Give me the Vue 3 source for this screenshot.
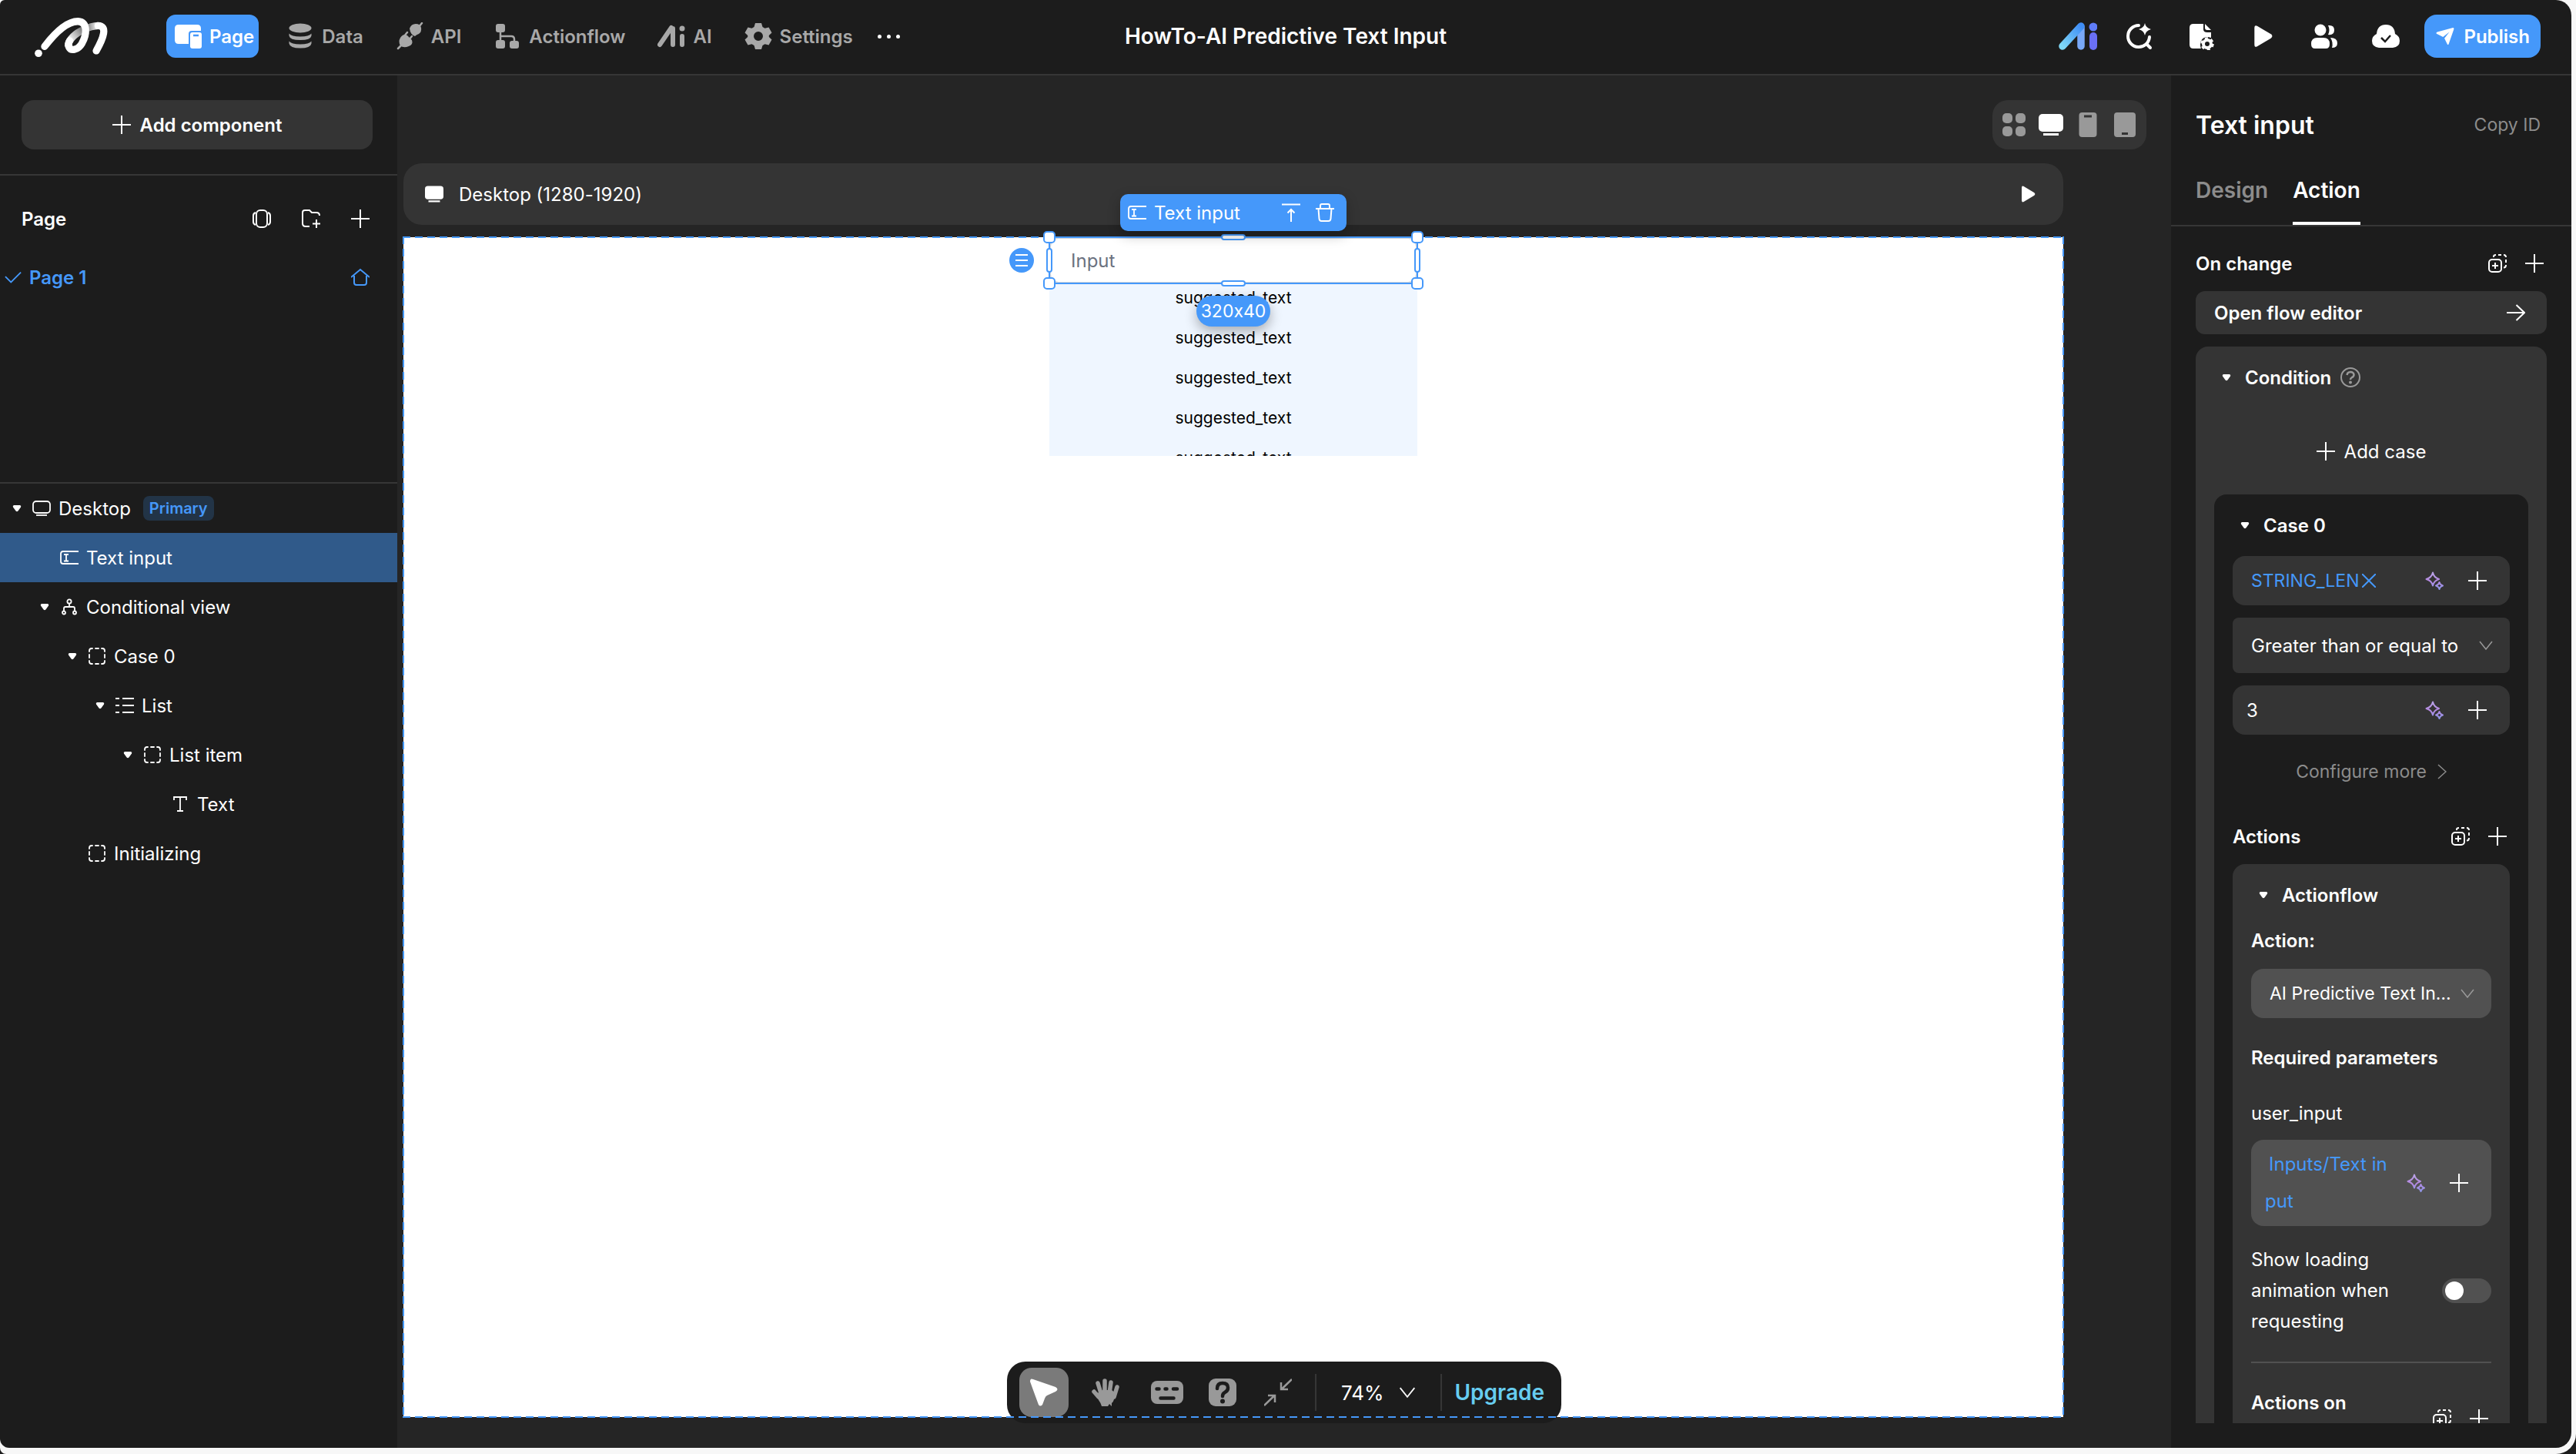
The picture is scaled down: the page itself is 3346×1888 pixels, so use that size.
<script setup>
import { ref } from "vue";

const tabs = [
  { name: "Page", icon: "page" },
  { name: "Data", icon: "data" },
  { name: "API", icon: "api" },
  { name: "Actionflow", icon: "flow" },
  { name: "AI", icon: "ai" },
  { name: "Settings", icon: "gear" },
];
const activeTab = ref("Page");

const tools = [
  { name: "Search", icon: "search" },
  { name: "Page settings", icon: "file" },
  { name: "Preview", icon: "play" },
  { name: "Members", icon: "users" },
  { name: "Saved", icon: "cloud" },
];

const devices = [
  { name: "All screens", icon: "grid" },
  { name: "Desktop", icon: "monitor" },
  { name: "Phone", icon: "phone" },
  { name: "Tablet", icon: "tablet" },
];
const activeDevice = ref("Desktop");

const tree = [
  { name: "Desktop", icon: "screen", level: 0, open: true, badge: "Primary" },
  { name: "Text input", icon: "textinput", level: 1 },
  { name: "Conditional view", icon: "branch", level: 1, open: true },
  { name: "Case 0", icon: "box", level: 2, open: true },
  { name: "List", icon: "list", level: 3, open: true },
  { name: "List item", icon: "box", level: 4, open: true },
  { name: "Text", icon: "text", level: 5 },
  { name: "Initializing", icon: "box", level: 2 },
];
const selected = ref("Text input");

const handles = ["nw", "n", "ne", "e", "se", "s", "sw", "w"];

const panelTab = ref("Action");
const operator = ref("gte");
const action = ref("predictive");
const compareValue = ref("3");
const showLoading = ref(false);
</script>

<template>
  <svg class="sprite" aria-hidden="true">
    <defs>
      <linearGradient id="g-ai" x1="0" y1="1" x2="1" y2="0">
        <stop offset="0" stop-color="#7fd8f7" />
        <stop offset="1" stop-color="#3f8df5" />
      </linearGradient>
      <linearGradient id="g-spark" x1="0" y1="0" x2="0" y2="1">
        <stop offset="0" stop-color="#b9a3e6" />
        <stop offset="0.5" stop-color="#b488e0" />
        <stop offset="1" stop-color="#8f96e8" />
      </linearGradient>
      <linearGradient id="g-logo" gradientUnits="userSpaceOnUse" x1="180" y1="125" x2="236" y2="82">
        <stop offset="0" stop-color="#fff" />
        <stop offset="1" stop-color="#777" />
      </linearGradient>
      <linearGradient id="g-logo2" gradientUnits="userSpaceOnUse" x1="250" y1="70" x2="292" y2="66">
        <stop offset="0" stop-color="#888" />
        <stop offset="1" stop-color="#fff" />
      </linearGradient>
    </defs>
    <symbol id="i-plus" viewBox="0 0 24 24">
      <path d="M12 0v24M0 12h24" stroke="currentColor" stroke-width="2" />
    </symbol>
    <symbol id="i-caret" viewBox="0 0 12 12">
      <path d="M2 2h8q2 .6 1 2.400L7.400 9.400Q6 11 4.600 9.400L1 4.400Q0 2.600 2 2z" fill="currentColor" />
    </symbol>
    <symbol id="i-down" viewBox="0 0 18 12">
      <path d="M1 1l8 10 8-10" fill="none" stroke="currentColor" stroke-width="1.500" />
    </symbol>
    <symbol id="i-copy" viewBox="0 0 24 24">
      <rect x="1" y="7" width="16" height="16" rx="4" fill="none" stroke="currentColor" stroke-width="2" />
      <path d="M9 11v8M5 15h8" stroke="currentColor" stroke-width="2" />
      <path d="M7 4V3q0-2 3-2M13 1h4M20 1q3 0 3 3M23 7v4M23 14q0 3.500-3 3.500" fill="none" stroke="currentColor" stroke-width="2" />
    </symbol>
    <symbol id="i-spark" viewBox="0 0 24 24">
      <path d="M10 1.500c1 4.500 3 7 8 8.500-5 1.500-7 4-8 8.500C9 14 7 11.500 1.500 10 7 8.500 9 6 10 1.500zM18.500 14q.8 3.500 4.500 4.500-3.700 1-4.500 4.500-.8-3.500-4.500-4.500 3.700-1 4.500-4.500z" fill="none" stroke="url(#g-spark)" stroke-width="2" stroke-linejoin="round" />
    </symbol>
    <symbol id="i-page" viewBox="0 0 36 36">
      <path d="M6 3h24q5 0 5 5v3H23q-4 0-4 4v13H6q-5 0-5-5V8q0-5 5-5z" fill="currentColor" />
      <rect x="21" y="13" width="15" height="21" rx="3" fill="currentColor" />
      <path d="M25 17h7" stroke="#4598fa" stroke-width="2.500" />
    </symbol>
    <symbol id="i-data" viewBox="0 0 36 36">
      <ellipse cx="18" cy="7.500" rx="14.500" ry="6" fill="currentColor" />
      <path d="M3.500 14.500q3 4 14.500 4t14.500-4v3q-1 5.500-14.500 5.500T3.500 17.500zM3.500 24.500q3 4 14.500 4t14.500-4v3q-1 6-14.500 6t-14.500-6z" fill="currentColor" />
    </symbol>
    <symbol id="i-api" viewBox="0 0 36 36">
      <path d="M30 6l4-5M3 34l4-4M11 18l4-5M17 23l4-5" stroke="currentColor" stroke-width="2.500" stroke-linecap="round" />
      <path d="M6 20q4-6 9-3l6 6q2 6-4 8-7 3-11-1-3-5 0-10zM18 8q2-6 8-6t7 5q1 5-3 8-3 1-5 3-6-2-7-10z" fill="currentColor" />
    </symbol>
    <symbol id="i-flow" viewBox="0 0 36 36">
      <rect x="3" y="2" width="12" height="11" rx="3" fill="currentColor" />
      <rect x="3" y="23" width="12" height="11" rx="3" fill="currentColor" />
      <rect x="21" y="24" width="12" height="10" rx="3" fill="currentColor" />
      <path d="M9 12v12M9 18h14q4 0 4 4v3" fill="none" stroke="currentColor" stroke-width="2.500" />
    </symbol>
    <symbol id="i-ai" viewBox="0 0 36 36">
      <path d="M3 29L18 7M20 8v21M32 18v11" stroke="currentColor" stroke-width="6" stroke-linecap="round" />
      <circle cx="32" cy="8" r="3.500" fill="currentColor" />
    </symbol>
    <symbol id="i-gear" viewBox="0 0 36 36">
      <path fill-rule="evenodd" d="M14 1h8l1.500 5 3 1.800 5-1.200 4 7-3.700 3.400v2l3.700 3.400-4 7-5-1.200-3 1.800L22 35h-8l-1.500-5-3-1.800-5 1.200-4-7L4.200 19v-2L.5 13.600l4-7 5 1.200 3-1.800zM18 12a6 6 0 1 0 0 12 6 6 0 0 0 0-12z" fill="currentColor" />
    </symbol>
    <symbol id="i-search" viewBox="0 0 36 36">
      <path d="M17 4A14 14 0 1 0 31 19M27 28l5 5" fill="none" stroke="currentColor" stroke-width="4" stroke-linecap="round" />
      <path d="M25 1q1 6 8 8-7 2-8 8-1-6-8-8 7-2 8-8z" fill="currentColor" />
    </symbol>
    <symbol id="i-file" viewBox="0 0 36 36">
      <path d="M8 2h13v7q0 4 5 4h5v7q-9-3-13 4-2 5 0 10H8q-5 0-5-5V7q0-5 5-5zM23 2l8 8h-5q-3 0-3-3z" fill="currentColor" />
      <circle cx="26" cy="28" r="5" fill="none" stroke="currentColor" stroke-width="4" />
      <circle cx="26" cy="28" r="7.500" fill="none" stroke="currentColor" stroke-width="2.500" stroke-dasharray="4 4" />
    </symbol>
    <symbol id="i-play" viewBox="0 0 36 36">
      <path d="M6 6q0-5 4-3l20 12q4 3 0 6L10 33q-4 2-4-3z" fill="currentColor" />
    </symbol>
    <symbol id="i-users" viewBox="0 0 36 36">
      <circle cx="13" cy="10" r="7.500" fill="currentColor" />
      <path d="M1 28q0-8 8-8h8q8 0 8 8 0 6-5 6H6q-5 0-5-6zM23 4q8-1 8 6t-8 6q3-6 0-12zM26 20q9 0 9 7 0 6-7 6 2-7-2-13z" fill="currentColor" />
    </symbol>
    <symbol id="i-cloud" viewBox="0 0 36 36">
      <path d="M9 33q-9-1-9-9 0-6 6-9Q7 3 18 3t12 12q6 3 6 9 0 8-9 9z" fill="currentColor" />
      <path d="M12 20l5 5 7-8" fill="none" stroke="#1c1c1c" stroke-width="2.500" />
    </symbol>
    <symbol id="i-send" viewBox="0 0 26 26">
      <path d="M24 1q2 0 1 3l-7 20q-1 2-2 0l-4-8 7-9-9 7-8-4q-3-1 0-3z" fill="currentColor" />
    </symbol>
    <symbol id="i-grid" viewBox="0 0 32 32">
      <g fill="currentColor"><rect x="1" y="1" width="13" height="13" rx="5" /><rect x="18" y="1" width="13" height="13" rx="5" /><rect x="1" y="18" width="13" height="13" rx="5" /><rect x="18" y="18" width="13" height="13" rx="5" /></g>
    </symbol>
    <symbol id="i-monitor" viewBox="0 0 32 32">
      <rect y="2" width="32" height="23" rx="5" fill="currentColor" />
      <path d="M6 28.500h20" stroke="currentColor" stroke-width="3" />
    </symbol>
    <symbol id="i-phone" viewBox="0 0 32 32">
      <rect x="4.500" width="23" height="32" rx="4" fill="currentColor" />
      <path d="M11 5h10" stroke="#343434" stroke-width="3" />
    </symbol>
    <symbol id="i-tablet" viewBox="0 0 32 32">
      <rect x="2" width="28" height="32" rx="4" fill="currentColor" />
      <path d="M12 27.500h8" stroke="#343434" stroke-width="3" />
    </symbol>
    <symbol id="i-screen" viewBox="0 0 24 24">
      <rect x="1" y="3" width="22" height="15" rx="4" fill="none" stroke="currentColor" stroke-width="1.800" />
      <path d="M5 21h14" stroke="currentColor" stroke-width="1.800" />
    </symbol>
    <symbol id="i-textinput" viewBox="0 0 24 24">
      <path d="M24 4H4Q1 4 1 7v10q0 3 3 3h20M5 8h6M8 8v8.500M5 16.500h6" fill="none" stroke="currentColor" stroke-width="1.800" />
    </symbol>
    <symbol id="i-branch" viewBox="0 0 24 24">
      <g fill="none" stroke="currentColor" stroke-width="1.800"><circle cx="12" cy="5" r="2.600" /><circle cx="5" cy="19.500" r="2" /><circle cx="19" cy="19.500" r="2" /><path d="M12 8v4M5 17v-3q0-2 2-2h10q2 0 2 2v3" /></g>
    </symbol>
    <symbol id="i-box" viewBox="0 0 24 24">
      <path d="M2 6V5q0-3 3-3h1M18 2h1q3 0 3 3v1M22 18v1q0 3-3 3h-1M6 22H5q-3 0-3-3v-1M10 2h4M10 22h4M2 10v4M22 10v4" fill="none" stroke="currentColor" stroke-width="1.800" stroke-linecap="round" />
    </symbol>
    <symbol id="i-list" viewBox="0 0 24 24">
      <path d="M0 3h5M0 12h5M0 21h5M9 3h15M9 12h15M9 21h15" stroke="currentColor" stroke-width="1.800" />
    </symbol>
    <symbol id="i-text" viewBox="0 0 24 24">
      <path d="M4 7V3h16v4M12 3v18M8 21h8" fill="none" stroke="currentColor" stroke-width="1.800" />
    </symbol>
    <symbol id="i-top" viewBox="0 0 24 24">
      <path d="M0 1.500h24M12 24V8M7.500 12.500L12 8l4.500 4.500" fill="none" stroke="currentColor" stroke-width="2" />
    </symbol>
    <symbol id="i-trash" viewBox="0 0 24 24">
      <path d="M0 7h24M6 7V3q0-2 2-2h8q2 0 2 2v4M3.500 7l1 13q.3 3 3 3h9q2.700 0 3-3l1-13" fill="none" stroke="currentColor" stroke-width="2" />
    </symbol>
  </svg>

  <div class="window">
    <div class="app">
      <header class="topbar">
        <svg class="logo" viewBox="40 25 292 165" role="img" aria-label="Home">
          <circle cx="58" cy="173" r="14.500" fill="#fff" />
          <g fill="none" stroke-width="28" stroke-linecap="round">
            <path d="M174 146C174 118 204 94 236 80" stroke="url(#g-logo)" stroke-linecap="butt" />
            <path d="M236 80Q265 66 292 65" stroke="url(#g-logo2)" stroke-linecap="butt" />
            <path d="M291 65C329 65 313 112 284 163" stroke="#fff" />
            <path d="M82 146C125 90 170 47 213 48C252 50 247 100 228 134C212 161 186 164 178 150C173 141 174 134 180 124" stroke="#fff" />
          </g>
        </svg>
        <nav class="tabs">
          <button
            v-for="tab in tabs"
            :key="tab.name"
            class="tab"
            :class="{ active: tab.name === activeTab }"
            @click="activeTab = tab.name"
          >
            <svg class="icon-lg"><use :href="`#i-${tab.icon}`" /></svg>{{ tab.name }}
          </button>
          <button class="more" aria-label="More"><i></i><i></i><i></i></button>
        </nav>
        <h1 class="project">HowTo-AI Predictive Text Input</h1>
        <div class="tools">
          <button class="tool" aria-label="AI assistant">
            <svg class="ai-logo" viewBox="0 0 50 36">
              <path d="M29 6v25" stroke="#79a8f8" stroke-width="9.500" stroke-linecap="round" />
              <path d="M5 31L29 5" stroke="url(#g-ai)" stroke-width="9.500" stroke-linecap="round" />
              <path d="M45 18v13" stroke="#6a6ff5" stroke-width="10" stroke-linecap="round" />
              <circle cx="45" cy="6" r="5.500" fill="#5f7cf8" />
            </svg>
          </button>
          <button v-for="tool in tools" :key="tool.name" class="tool" :aria-label="tool.name">
            <svg class="icon-lg" :class="{ slim: tool.icon === 'play' }"><use :href="`#i-${tool.icon}`" /></svg>
          </button>
          <button class="publish">
            <svg class="icon"><use href="#i-send" /></svg>Publish
          </button>
        </div>
      </header>

      <div class="main">
        <aside class="left">
          <div class="add-box">
            <button class="add"><svg class="icon"><use href="#i-plus" /></svg>Add component</button>
          </div>
          <section class="pages">
            <div class="pages-head">
              <h2>Page</h2>
              <button aria-label="Carousel">
                <svg class="icon" viewBox="0 0 24 24"><rect x="5" y="1" width="14" height="22" rx="5" fill="none" stroke="currentColor" stroke-width="2" /><path d="M4 4Q1 5 1 8v8q0 3 3 4M20 4q3 1 3 4v8q0 3-3 4" fill="none" stroke="currentColor" stroke-width="2" /></svg>
              </button>
              <button aria-label="New folder">
                <svg class="icon" viewBox="0 0 24 24"><path d="M23 8q0-4-4-4h-6l-3-3H4Q1 1 1 4v14q0 4 4 4h5M19 13v11M14 18.500h10" fill="none" stroke="currentColor" stroke-width="2" /></svg>
              </button>
              <button aria-label="New page"><svg class="icon"><use href="#i-plus" /></svg></button>
            </div>
            <button class="page-row">
              <svg class="check" viewBox="0 0 24 18"><path d="M1 8l8 8L23 2" fill="none" stroke="currentColor" stroke-width="2" /></svg>
              <span>Page 1</span>
              <svg class="icon" viewBox="0 0 24 24"><path d="M0 12L12 2l12 10M4 10v9q0 3 3 3h10q3 0 3-3v-9" fill="none" stroke="currentColor" stroke-width="2" /></svg>
            </button>
          </section>
          <ul class="tree">
            <li v-for="node in tree" :key="node.name">
              <button
                class="node"
                :class="{ selected: node.name === selected }"
                :style="{ paddingLeft: `${12 + node.level * 36}px` }"
                @click="selected = node.name"
              >
                <span class="caret-slot"><svg v-if="node.open" class="caret"><use href="#i-caret" /></svg></span>
                <svg class="icon"><use :href="`#i-${node.icon}`" /></svg>
                <span>{{ node.name }}</span>
                <span v-if="node.badge" class="badge">{{ node.badge }}</span>
              </button>
            </li>
          </ul>
        </aside>

        <main class="workspace">
          <div class="devices">
            <button
              v-for="device in devices"
              :key="device.name"
              :class="{ active: device.name === activeDevice }"
              :aria-label="device.name"
              @click="activeDevice = device.name"
            >
              <svg class="device-icon"><use :href="`#i-${device.icon}`" /></svg>
            </button>
          </div>
          <div class="screen-bar">
            <svg class="icon"><use href="#i-monitor" /></svg>
            <span>Desktop (1280-1920)</span>
            <button aria-label="Run preview"><svg class="icon"><use href="#i-play" /></svg></button>
          </div>
          <div class="page">
            <div class="frame">
              <input class="page-input" type="text" placeholder="Input" aria-label="Input" />
              <span v-for="h in handles" :key="h" class="handle" :class="h"></span>
              <div class="frame-bar">
                <svg class="icon"><use href="#i-textinput" /></svg>
                <span>Text input</span>
                <button aria-label="Select parent"><svg class="icon"><use href="#i-top" /></svg></button>
                <button aria-label="Delete"><svg class="icon"><use href="#i-trash" /></svg></button>
              </div>
              <button class="frame-menu" aria-label="Menu"><i></i><i></i><i></i></button>
              <span class="size">320x40</span>
            </div>
            <ul class="suggestions">
              <li v-for="n in 5" :key="n">suggested_text</li>
            </ul>
          </div>
          <div class="dock">
            <button class="dock-btn active" aria-label="Select">
              <svg viewBox="0 0 36 36"><path d="M0 4q0-5 4-3l29 10q5 3 0 6l-11 5q-2 1-3 4l-3 8q-3 3-5 0Q8 26 0 4z" fill="currentColor" /></svg>
            </button>
            <button class="dock-btn" aria-label="Pan">
              <svg viewBox="0 0 36 36"><path d="M3 17l6 7M8 6l4 13M17 3v15M25 5l-2 14M33 11l-4 13" stroke="currentColor" stroke-width="5.500" stroke-linecap="round" /><path d="M4 17l6 2 4-4h12l5 4-2 8q-1 4-3 5v4l-3-3-2 3H13q-1-4-4-8z" fill="currentColor" /></svg>
            </button>
            <button class="dock-btn" aria-label="Shortcuts">
              <svg class="keys" viewBox="0 0 42 30"><rect width="42" height="30" rx="8" fill="currentColor" /><path d="M7.500 10.500h3M18.500 10.500h2M29 10.500h5M12.500 22.500h17" stroke="#1c1c1c" stroke-width="4.500" stroke-linecap="round" /></svg>
            </button>
            <button class="dock-btn tight" aria-label="Help">
              <svg viewBox="0 0 36 36"><rect width="36" height="36" rx="9" fill="currentColor" /><path d="M11 13q0-7 7-7t7 6q0 4-4 6-3 1.500-3 5" fill="none" stroke="#1c1c1c" stroke-width="4.500" stroke-linecap="round" /><circle cx="18" cy="29.500" r="3" fill="#1c1c1c" /></svg>
            </button>
            <button class="dock-btn tight" aria-label="Zoom to fit">
              <svg viewBox="0 0 36 36"><path d="M36 1L23 13.500M22 5v9h9M0 35l13-12.500M5 22h9v9" fill="none" stroke="currentColor" stroke-width="2.500" /></svg>
            </button>
            <button class="zoom-level">74%<svg viewBox="0 0 18 12"><use href="#i-down" /></svg></button>
            <a class="upgrade" href="#upgrade">Upgrade</a>
          </div>
        </main>

        <aside class="right">
          <div class="panel-title">
            <h2>Text input</h2>
            <button>Copy ID</button>
          </div>
          <div class="panel-tabs">
            <button :class="{ active: panelTab === 'Design' }" @click="panelTab = 'Design'">Design</button>
            <button :class="{ active: panelTab === 'Action' }" @click="panelTab = 'Action'">Action</button>
          </div>
          <div class="panel-body">
            <div class="row-head first">
              <h3>On change</h3>
              <button aria-label="Paste action"><svg class="icon"><use href="#i-copy" /></svg></button>
              <button aria-label="Add action"><svg class="icon"><use href="#i-plus" /></svg></button>
            </div>
            <button class="open-flow">
              Open flow editor
              <svg class="icon" viewBox="0 0 24 24"><path d="M0 12h23M12.500 2L23 12 12.500 22" fill="none" stroke="currentColor" stroke-width="2" /></svg>
            </button>

            <div class="card condition">
              <h3 class="card-head">
                <span class="caret-slot"><svg class="caret"><use href="#i-caret" /></svg></span>Condition
                <svg class="help" viewBox="0 0 26 26"><circle cx="13" cy="13" r="12" fill="none" stroke="currentColor" stroke-width="2" /><path d="M8.500 10q.5-4 4.500-4t4.500 3.500Q17.500 12 15 13q-2 1-2 3" fill="none" stroke="currentColor" stroke-width="2.500" /><circle cx="13" cy="19.500" r="2" fill="currentColor" /></svg>
              </h3>
              <button class="add-case"><svg class="icon"><use href="#i-plus" /></svg>Add case</button>

              <div class="card case">
                <h3 class="card-head">
                  <span class="caret-slot"><svg class="caret"><use href="#i-caret" /></svg></span>Case 0
                </h3>
                <div class="fields">
                  <div class="field">
                    <button class="chip">STRING_LEN<svg viewBox="0 0 18 18"><path d="M0 0l18 18M18 0L0 18" stroke="currentColor" stroke-width="2" /></svg></button>
                    <button aria-label="Generate"><svg class="icon"><use href="#i-spark" /></svg></button>
                    <button aria-label="Bind data"><svg class="icon"><use href="#i-plus" /></svg></button>
                  </div>
                  <div class="select tall">
                    <select v-model="operator" aria-label="Operator">
                      <option value="gte">Greater than or equal to</option>
                    </select>
                    <svg><use href="#i-down" /></svg>
                  </div>
                  <div class="field narrow">
                    <input v-model="compareValue" type="text" aria-label="Value" />
                    <button aria-label="Generate"><svg class="icon"><use href="#i-spark" /></svg></button>
                    <button aria-label="Bind data"><svg class="icon"><use href="#i-plus" /></svg></button>
                  </div>
                </div>
                <button class="configure">
                  Configure more
                  <svg viewBox="0 0 12 20"><path d="M1 1l10 9L1 19" fill="none" stroke="currentColor" stroke-width="1.500" /></svg>
                </button>
                <div class="row-head">
                  <h3>Actions</h3>
                  <button aria-label="Paste action"><svg class="icon"><use href="#i-copy" /></svg></button>
                  <button aria-label="Add action"><svg class="icon"><use href="#i-plus" /></svg></button>
                </div>

                <div class="card flow">
                  <h3 class="card-head">
                    <span class="caret-slot"><svg class="caret"><use href="#i-caret" /></svg></span>Actionflow
                  </h3>
                  <label class="label" for="action">Action:</label>
                  <div class="select light">
                    <select id="action" v-model="action">
                      <option value="predictive">AI Predictive Text Input</option>
                    </select>
                    <svg><use href="#i-down" /></svg>
                  </div>
                  <h4 class="label spaced">Required parameters</h4>
                  <p class="param">user_input</p>
                  <div class="field light narrow">
                    <p class="binding"><a href="#binding">Inputs/Text input</a></p>
                    <button aria-label="Generate"><svg class="icon"><use href="#i-spark" /></svg></button>
                    <button aria-label="Bind data"><svg class="icon"><use href="#i-plus" /></svg></button>
                  </div>
                  <label class="toggle">
                    <span>Show loading animation when requesting</span>
                    <input v-model="showLoading" type="checkbox" role="switch" />
                  </label>
                  <div class="row-head success">
                    <h3>Actions on success</h3>
                    <button aria-label="Paste action"><svg class="icon"><use href="#i-copy" /></svg></button>
                    <button aria-label="Add action"><svg class="icon"><use href="#i-plus" /></svg></button>
                  </div>
                </div>
              </div>
            </div>
          </div>
        </aside>
      </div>
    </div>
  </div>
</template>

<style>
body {
  margin: 0;
  background: #1c1c1c;
}
</style>

<style scoped>
* {
  box-sizing: border-box;
}
.sprite {
  position: absolute;
  width: 0;
  height: 0;
}
.window {
  height: 100vh;
  padding: 0 6px 8px 0;
  background: #f7f7f7;
  border-radius: 0 0 26px 8px;
  font-family: Inter, "Liberation Sans", sans-serif;
  font-size: 24px;
  font-variant-ligatures: no-contextual;
  color: #fff;
  overflow: hidden;
}
.app {
  height: 100%;
  display: flex;
  flex-direction: column;
  background: #1c1c1c;
  border-radius: 6px 20px 20px 12px;
  overflow: hidden;
}
h1,
h2,
h3,
h4,
p,
ul {
  margin: 0;
  padding: 0;
  font-size: inherit;
  list-style: none;
}
h1,
h2,
h3,
h4 {
  font-weight: 600;
}
button {
  border: 0;
  padding: 0;
  background: none;
  color: inherit;
  font: inherit;
  display: flex;
  align-items: center;
  cursor: pointer;
}
a {
  text-decoration: none;
}
svg {
  flex: none;
  display: block;
}
.icon {
  width: 24px;
  height: 24px;
}
.icon-lg {
  width: 36px;
  height: 36px;
}
.slim {
  width: 32px;
  height: 32px;
}

/* top bar */
.topbar {
  flex: none;
  height: 98px;
  padding: 12px 40px 14px;
  border-bottom: 2px solid #363636;
  display: grid;
  grid-template-columns: 1fr auto 1fr;
  grid-template-rows: 100%;
  align-items: center;
}
.logo {
  width: 97px;
  height: 55px;
  margin-left: 4px;
  grid-area: 1 / 1;
}
.tabs {
  grid-area: 1 / 1;
  margin-left: 176px;
  display: flex;
  gap: 26px;
}
.tab {
  height: 56px;
  padding: 0 6px 0 10px;
  gap: 10px;
  border-radius: 12px;
  color: #a8a8a8;
  font-weight: 600;
}
.tab.active {
  background: #4598fa;
  color: #fff;
}
.more {
  gap: 7px;
}
.more i {
  width: 5px;
  height: 5px;
  border-radius: 50%;
  background: #fff;
}
.project {
  grid-area: 1 / 2;
  font-size: 28px;
}
.tools {
  grid-area: 1 / 3;
  display: flex;
  justify-content: flex-end;
  align-items: center;
}
.tool {
  width: 80px;
  height: 56px;
  justify-content: center;
}
.ai-logo {
  width: 50px;
  height: 36px;
}
.publish {
  height: 56px;
  margin-left: 10px;
  padding: 0 14px 0 15px;
  gap: 12px;
  border-radius: 16px;
  background: #4598fa;
  font-weight: 600;
}

.main {
  flex: 1;
  min-height: 0;
  display: flex;
}

/* left panel */
.left {
  flex: none;
  width: 516px;
}
.add-box {
  padding: 32px;
  padding-left: 28px;
  border-bottom: 2px solid #363636;
}
.add {
  width: 100%;
  height: 64px;
  justify-content: center;
  gap: 12px;
  border-radius: 16px;
  background: #343434;
  font-weight: 600;
}
.pages {
  min-height: 400px;
  padding: 24px 36px 0 0;
  border-bottom: 2px solid #363636;
}
.pages-head {
  height: 64px;
  padding-left: 28px;
  display: flex;
  align-items: center;
  gap: 40px;
}
.pages-head h2 {
  flex: 1;
}
.page-row {
  width: 100%;
  height: 56px;
  margin-top: 16px;
  padding-left: 6px;
  gap: 10px;
  color: #4598fa;
  font-weight: 600;
}
.page-row span {
  flex: 1;
  text-align: left;
}
.check {
  width: 22px;
  height: 18px;
}
.node {
  width: 100%;
  height: 64px;
}
.node .icon {
  margin: 0 10px;
}
.node.selected {
  background: #305a8a;
}
.caret-slot {
  width: 20px;
  display: flex;
  justify-content: center;
}
.caret {
  width: 12px;
  height: 12px;
}
.badge {
  height: 32px;
  margin-left: 16px;
  padding: 0 8px;
  border-radius: 8px;
  background: #223447;
  color: #4598fa;
  font-size: 20px;
  font-weight: 600;
  line-height: 32px;
}

/* workspace */
.workspace {
  flex: 1;
  min-width: 0;
  padding: 32px 140px 40px 8px;
  background: #252525;
  display: flex;
  flex-direction: column;
  position: relative;
}
.devices {
  align-self: flex-end;
  height: 64px;
  margin-right: -108px;
  padding: 0 4px;
  border-radius: 20px;
  background: #343434;
  display: flex;
  color: #999;
}
.devices button {
  width: 48px;
  justify-content: center;
}
.devices .active {
  color: #fff;
}
.device-icon {
  width: 32px;
  height: 32px;
}
.screen-bar {
  height: 80px;
  margin: 18px 0 16px;
  padding: 0 34px 0 28px;
  border-radius: 24px;
  background: #343434;
  display: flex;
  align-items: center;
  gap: 20px;
}
.screen-bar span {
  flex: 1;
}
.page {
  flex: 1;
  background: #fff;
  display: flex;
  flex-direction: column;
  align-items: center;
  position: relative;
}
/* dashed outline stays above the dock */
.page::after {
  content: "";
  position: absolute;
  z-index: 3;
  inset: -1px;
  pointer-events: none;
  background:
    repeating-linear-gradient(90deg, #4598fa 0 10px, transparent 10px 16px) 0 0 / 100% 2px no-repeat,
    repeating-linear-gradient(90deg, #4598fa 0 10px, transparent 10px 16px) 0 100% / 100% 2px no-repeat,
    repeating-linear-gradient(#4598fa 0 10px, transparent 10px 16px) 0 0 / 2px 100% no-repeat,
    repeating-linear-gradient(#4598fa 0 10px, transparent 10px 16px) 100% 0 / 2px 100% no-repeat;
}
.frame {
  width: 478px;
  height: 60px;
  position: relative;
  z-index: 4;
  outline: 2px solid #4598fa;
  outline-offset: -1px;
}
.page-input {
  width: 100%;
  height: 100%;
  padding: 0 26px;
  border: 2px solid #d1d5db;
  border-radius: 12px;
  background: #fff;
  color: #111;
  font: inherit;
}
.page-input::placeholder {
  color: #6b7280;
  opacity: 1;
}
.handle {
  position: absolute;
  width: 16px;
  height: 16px;
  margin: -8px;
  border: 2px solid #4598fa;
  border-radius: 5px;
  background: #fff;
}
.n,
.s {
  width: 32px;
  height: 8px;
  margin: -4px -16px;
  left: 50%;
}
.e,
.w {
  width: 8px;
  height: 32px;
  margin: -16px -4px;
  top: 50%;
}
.nw,
.n,
.ne {
  top: 0;
}
.sw,
.s,
.se {
  top: 100%;
}
.nw,
.w,
.sw {
  left: 0;
}
.ne,
.e,
.se {
  left: 100%;
}
.frame-bar {
  position: absolute;
  left: 92px;
  bottom: 68px;
  width: 294px;
  height: 48px;
  padding: 0 16px 0 10px;
  border-radius: 10px;
  background: #4598fa;
  box-shadow: 0 6px 16px rgba(0, 0, 0, 0.25);
  display: flex;
  align-items: center;
  gap: 20px;
}
.frame-bar span {
  flex: 1;
  margin-left: -10px;
  white-space: nowrap;
}
.frame-menu {
  position: absolute;
  left: -52px;
  top: 14px;
  width: 32px;
  height: 32px;
  border-radius: 50%;
  background: #4598fa;
  flex-direction: column;
  justify-content: center;
  gap: 5px;
}
.frame-menu i {
  width: 16px;
  height: 2px;
  background: #fff;
}
.size {
  position: absolute;
  left: 191px;
  top: 76px;
  width: 96px;
  border-radius: 20px;
  background: #4598fa;
  box-shadow: 0 6px 16px rgba(0, 0, 0, 0.3);
  font-size: 23px;
  line-height: 40px;
  text-align: center;
}
.suggestions {
  width: 478px;
  height: 224px;
  background: #eff6ff;
  overflow: hidden;
  color: #000;
  font-size: 21px;
  text-align: center;
}
.suggestions li {
  line-height: 38px;
  margin-bottom: 14px;
}
.dock {
  position: absolute;
  z-index: 2;
  left: 0;
  right: 0;
  bottom: 32px;
  width: fit-content;
  height: 80px;
  margin: 0 auto;
  padding: 0 22px 0 16px;
  border-radius: 24px;
  background: #1c1c1c;
  display: flex;
  align-items: center;
}
.dock-btn {
  width: 64px;
  height: 64px;
  margin-right: 16px;
  justify-content: center;
  border-radius: 16px;
  color: #999;
}
.dock-btn svg {
  width: 36px;
  height: 36px;
}
.dock-btn .keys {
  width: 42px;
  height: 30px;
}
.dock-btn.active {
  background: #7a7a7a;
  color: #fff;
}
.dock-btn.tight {
  margin: 0 16px 0 -8px;
}
.zoom-level {
  height: 48px;
  padding: 0 32px;
  gap: 20px;
  border: solid #363636;
  border-width: 0 2px;
  font-size: 26px;
}
.zoom-level svg {
  width: 22px;
  height: 14px;
}
.upgrade {
  margin-left: 16px;
  color: #67cdf0;
  font-size: 28px;
  font-weight: 600;
}

/* right panel */
.right {
  flex: none;
  width: 520px;
  padding-bottom: 32px;
  display: flex;
  flex-direction: column;
}
.panel-title {
  height: 96px;
  padding: 32px 40px 0 32px;
  display: flex;
  align-items: center;
  justify-content: space-between;
}
.panel-title h2 {
  font-size: 32px;
}
.panel-title button,
.panel-tabs button,
.configure {
  color: #8c8c8c;
}
.panel-title button,
.configure,
.chip {
  font-size: 23px;
}
.panel-tabs {
  padding: 0 32px;
  border-bottom: 2px solid #363636;
  display: flex;
  gap: 32px;
}
.panel-tabs button {
  padding: 32px 0 20px;
  border-bottom: 4px solid transparent;
  font-size: 28px;
  font-weight: 600;
  line-height: 42px;
}
.panel-tabs .active {
  border-color: #fff;
  color: #fff;
}
.panel-body {
  flex: 1;
  min-height: 0;
  overflow: hidden;
  padding: 24px 32px 0;
}
.row-head {
  min-height: 48px;
  margin: 28px 0 12px;
  padding-right: 4px;
  display: flex;
  align-items: center;
  gap: 24px;
}
.row-head h3 {
  flex: 1;
}
.row-head.first {
  margin-top: 0;
}
.open-flow {
  width: 100%;
  height: 56px;
  padding: 0 28px 0 24px;
  justify-content: space-between;
  border-radius: 12px;
  background: #343434;
  font-weight: 600;
}
.card {
  padding: 0 24px;
  border-radius: 16px;
  background: #343434;
}
.condition {
  margin-top: 16px;
}
.case {
  background: #1c1c1c;
}
.card-head {
  height: 80px;
  display: flex;
  align-items: center;
}
.card-head .caret-slot {
  width: 32px;
  margin-right: 8px;
}
.help {
  width: 26px;
  height: 26px;
  margin-left: 12px;
  color: #999;
}
.add-case {
  height: 56px;
  margin: 28px auto;
  gap: 12px;
}
.fields {
  display: flex;
  flex-direction: column;
  gap: 16px;
}
.field {
  min-height: 64px;
  padding: 8px 30px 8px 24px;
  border-radius: 16px;
  background: #343434;
  display: flex;
  align-items: center;
  gap: 32px;
}
.field.narrow {
  padding-left: 18px;
}
.field.light {
  background: #515151;
}
.field input {
  flex: 1;
  min-width: 0;
  padding: 0;
  border: 0;
  background: none;
  color: #fff;
  font: inherit;
}
.chip {
  margin-right: auto;
  gap: 3px;
  color: #4598fa;
}
.chip svg {
  width: 18px;
  height: 18px;
}
.select {
  height: 64px;
  padding: 0 22px 0 24px;
  border-radius: 16px;
  background: #343434;
  display: flex;
  align-items: center;
  gap: 8px;
  color: #999;
}
.select.tall {
  height: 72px;
  border-radius: 8px;
}
.select.light {
  margin-top: 16px;
  background: #515151;
  font-size: 23px;
}
.select select {
  flex: 1;
  min-width: 0;
  height: 100%;
  padding: 0;
  border: 0;
  appearance: none;
  background: none;
  color: #fff;
  font: inherit;
  text-overflow: ellipsis;
  white-space: nowrap;
  overflow: hidden;
}
.select svg {
  width: 18px;
  height: 12px;
}
.configure {
  height: 64px;
  margin: 16px auto 0;
  gap: 14px;
}
.configure svg {
  width: 12px;
  height: 20px;
}
.label,
.param {
  display: block;
  font-weight: 600;
  line-height: 40px;
}
.spaced {
  margin-top: 32px;
}
.param {
  margin: 32px 0 14px;
  font-weight: 400;
}
.binding {
  flex: 1;
  margin-right: -16px;
  line-height: 48px;
  word-break: break-all;
}
.binding a {
  padding: 0 5px;
  color: #4598fa;
}
.toggle {
  margin-top: 24px;
  padding-bottom: 32px;
  border-bottom: 2px solid #515151;
  display: flex;
  align-items: center;
  justify-content: space-between;
}
.toggle span {
  width: 200px;
  line-height: 40px;
}
.toggle input {
  width: 64px;
  height: 32px;
  margin: 0;
  padding: 4px;
  appearance: none;
  border-radius: 16px;
  background: #515151;
}
.toggle input::before {
  content: "";
  display: block;
  width: 24px;
  height: 24px;
  border-radius: 50%;
  background: #fff;
}
.toggle input:checked::before {
  margin-left: 32px;
}
.success {
  margin-top: 32px;
}
.success h3 {
  line-height: 40px;
}
</style>
